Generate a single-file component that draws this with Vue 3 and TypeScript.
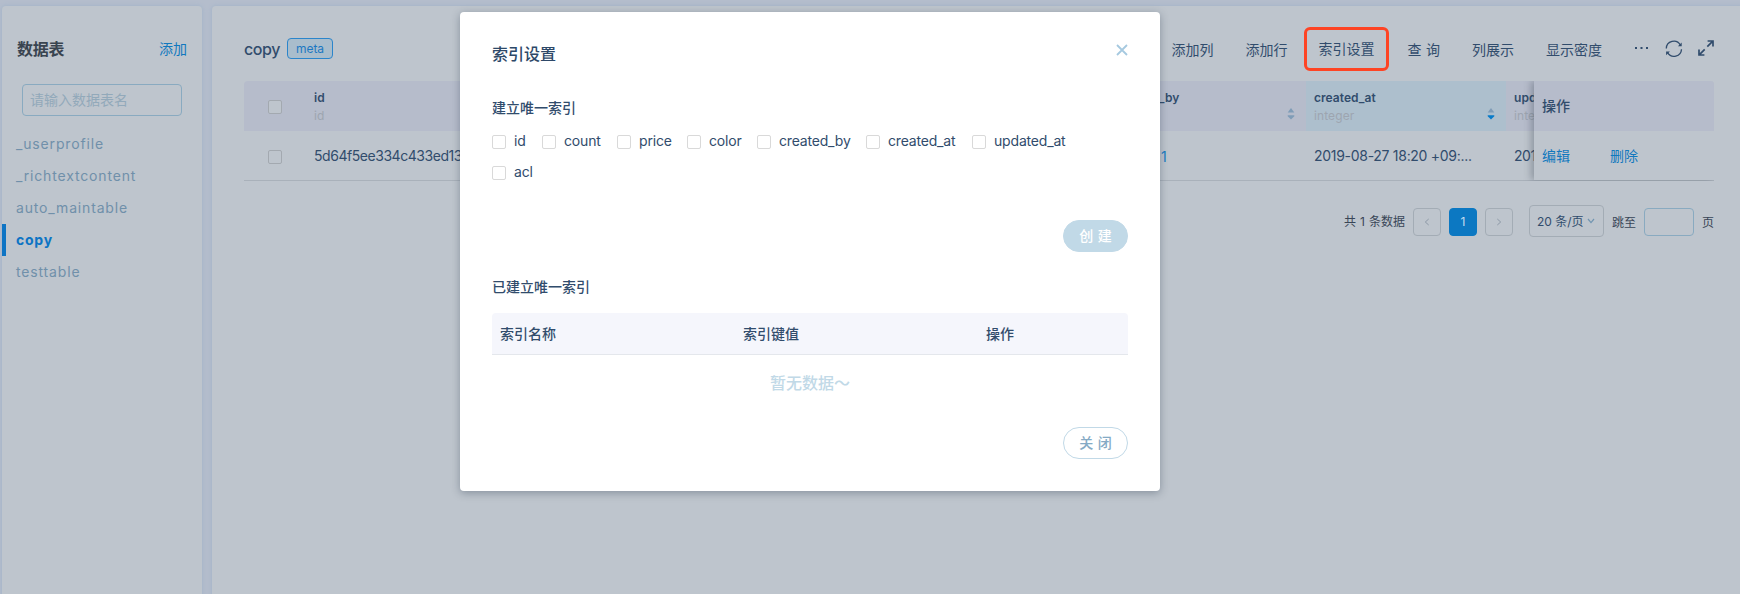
<script setup lang="ts">
import { ref } from 'vue'

interface Column {
  title: string
  type: string
  value: string
  sortable?: boolean
  sorted?: boolean
  link?: boolean
}

const tables: string[] = ['_userprofile', '_richtextcontent', 'auto_maintable', 'copy', 'testtable']
const current = ref('copy')
const actions: string[] = ['添加列', '添加行', '索引设置', '查 询', '列展示', '显示密度']
const fields: string[] = ['id', 'count', 'price', 'color', 'created_by', 'created_at', 'updated_at', 'acl']
const columns: Column[] = [
  { title: 'id', type: 'id', value: '5d64f5ee334c433ed13' },
  { title: '', type: '', value: '' },
  { title: '', type: '', value: '' },
  { title: '', type: '', value: '' },
  { title: 'created_by', type: '', value: '1', sortable: true, link: true },
  { title: 'created_at', type: 'integer', value: '2019-08-27 18:20 +09:...', sortable: true, sorted: true },
  { title: 'upd', type: 'inte', value: '201' },
]
</script>

<template>
  <div class="page">
    <aside class="card sidebar">
      <header class="side-head">
        <h2>数据表</h2>
        <a>添加</a>
      </header>
      <div class="search">请输入数据表名</div>
      <ul class="tables">
        <li v-for="t in tables" :key="t" :class="{ active: t === current }" @click="current = t">{{ t }}</li>
      </ul>
    </aside>

    <main class="card content">
      <header class="bar">
        <span class="name">copy</span>
        <span class="tag">meta</span>
        <nav class="tools">
          <span v-for="a in actions" :key="a" :class="['tool', { marked: a === '索引设置' }]"><span>{{ a }}</span></span>
          <svg class="dots" width="14" height="4" viewBox="0 0 14 4"><rect x="0" y="1" width="2" height="2" /><rect x="5.5" y="1" width="2" height="2" /><rect x="11" y="1" width="2" height="2" /></svg>
          <svg class="refresh" width="18" height="18" viewBox="0 0 18 18"><path d="M1.3 8.6A7.5 7.5 0 0 1 15.4 5.1M16.5 9.2A7.5 7.5 0 0 1 2.6 12.7" /><path class="tip" d="M16.7 2.4V6.2H12.9ZM1.1 15.2V11.4H4.9Z" /></svg>
          <svg class="expand" width="16" height="16" viewBox="0 0 16 16"><path d="M9.3 6.7L14.8 1.2M9.6 1H15V6.4M6.7 9.3L1.2 14.8M1 9.6V15H6.4" /></svg>
        </nav>
      </header>

      <section class="grid">
        <div class="row head">
          <div class="cell check"><i class="box" /></div>
          <div v-for="(c, i) in columns" :key="i" :class="['cell', { sorted: c.sorted }]">
            <b>{{ c.title }}</b>
            <small>{{ c.type }}</small>
            <svg v-if="c.sortable" class="sorter" width="8" height="14" viewBox="0 0 8 14">
              <path class="up" d="M4 1L7.3 5.4H.7Z" /><path class="down" d="M.7 8.2H7.3V9.2L4 12.6L.7 9.2Z" />
            </svg>
          </div>
        </div>
        <div class="row body">
          <div class="cell check"><i class="box" /></div>
          <div v-for="(c, i) in columns" :key="i" :class="['cell', { link: c.link, date: c.sorted }]"><span>{{ c.value }}</span></div>
        </div>
        <div class="fixed">
          <div class="fixed-head">操作</div>
          <div class="fixed-body"><a>编辑</a><a>删除</a></div>
        </div>
      </section>

      <footer class="pager">
        <span class="total">共 1 条数据</span>
        <span class="pg"><svg width="6" height="8" viewBox="0 0 6 8"><path d="M4.7 1L1.3 4L4.7 7" /></svg></span>
        <span class="pg on">1</span>
        <span class="pg"><svg width="6" height="8" viewBox="0 0 6 8"><path d="M1.3 1L4.7 4L1.3 7" /></svg></span>
        <span class="size">20 条/页<svg width="8" height="6" viewBox="0 0 8 6"><path d="M1 1L4 4.6L7 1" /></svg></span>
        <span class="jump">跳至</span>
        <span class="jump-input" />
        <span class="unit">页</span>
      </footer>
    </main>

    <div class="modal">
      <svg class="close" width="12" height="12" viewBox="0 0 12 12"><path d="M1 1L11 11M11 1L1 11" /></svg>
      <h1>索引设置</h1>
      <h3>建立唯一索引</h3>
      <div class="fields">
        <label v-for="f in fields" :key="f"><i class="box light" /><span>{{ f }}</span></label>
      </div>
      <div class="right create"><button class="primary">创 建</button></div>
      <h3>已建立唯一索引</h3>
      <div class="index-head"><span>索引名称</span><span>索引键值</span><span>操作</span></div>
      <p class="empty">暂无数据～</p>
      <div class="right"><button class="ghost">关 闭</button></div>
    </div>
  </div>
</template>

<style>
body { margin: 0; overflow: hidden; }
</style>

<style scoped>
* { box-sizing: border-box; }
h1, h2, h3, p, ul { margin: 0; padding: 0; font-weight: 500; }
svg { display: block; fill: none; flex: none; }
.page {
  position: relative; width: 1740px; height: 594px; overflow: hidden;
  display: flex; gap: 10px; padding: 6px 0 0 2px; background: #b4bdcc;
  font: 14px/20px Inter, "Noto Sans CJK SC", sans-serif; color: #314c6c;
}
.card { background: #bec5cd; box-shadow: 0 0 4px #9fb2c8; border-radius: 4px; height: 600px; flex: none; }
.sidebar { width: 200px; }
.side-head { display: flex; justify-content: space-between; padding: 33px 15px 0; line-height: 20px; }
h2 { font-size: 16px; font-weight: 700; color: #394450; letter-spacing: -.2px; }
a { color: #1178be; }
.search {
  margin: 25px 20px 12px; height: 32px; border: 1px solid #89aac0; border-radius: 4px;
  padding: 0 7px; line-height: 30px; color: #92a9ba;
}
.tables { list-style: none; }
.tables li { height: 32px; line-height: 32px; padding-left: 14px; letter-spacing: .84px; color: #7090aa; font-weight: 400; }
.tables .active { padding-left: 10px; border-left: 4px solid #0d74c4; color: #0d74c4; font-weight: 700; letter-spacing: .75px; }

.content { width: 1540px; padding: 0 0 0 32px; }
.bar { display: flex; align-items: center; width: 1470px; height: 75px; padding-top: 10px; }
.name { font-size: 16px; font-weight: 500; width: 43px; letter-spacing: -.4px; margin-top: 1px; }
.tag {
  width: 46px; height: 21px; border: 1px solid #2b85cb; border-radius: 4px; background: #a9bdcc;
  color: #1c78c2; font-size: 12px; line-height: 19px; text-align: center;
}
.tools { display: flex; align-items: center; margin-left: auto; height: 44px; }
.tool { height: 44px; padding: 0 13px; line-height: 39px; border: 3px solid transparent; border-radius: 6px; white-space: nowrap; }
.tool span { display: block; }
.tool:nth-child(4) { word-spacing: .6px; }
.marked { border-color: #fe4424; padding: 0 12px 0 11px; margin: 1px 2px 0 1px; line-height: 37px; }
.dots { fill: #314c6c; margin: -1px 16px 0 17px; }
.refresh { stroke: #314c6c; stroke-width: 1.3; margin: 0 15px 0 0; }
.tip { fill: #314c6c; stroke: none; }
.expand { stroke: #314c6c; stroke-width: 1.7; margin-top: -1px; }

.grid { position: relative; width: 1470px; height: 100px; overflow: hidden; border-radius: 4px 4px 0 0; margin-bottom: 24px; }
.row { display: grid; grid-template-columns: 62px repeat(6, 200px) 28px 180px; height: 50px; }
.head { background: #b6bccb; }
.body { border-bottom: 1px solid #a9b1ba; }
.cell { position: relative; padding: 0 0 0 8px; white-space: nowrap; }
.head .cell { padding-top: 8px; }
.head b, .head small { display: block; font-size: 12px; line-height: 18px; height: 18px; }
.head b { font-weight: 600; letter-spacing: .05px; }
.head small { color: #9da5b0; letter-spacing: .1px; }
.body .cell { line-height: 49px; letter-spacing: -.45px; }
.body .date { letter-spacing: -.29px; }
.row .check { display: flex; align-items: center; padding: 0 0 0 24px; }
.row.head .check { padding-top: 2px; }
.sorted { background: #adbfcd; }
.sorter { position: absolute; right: 11px; top: 26px; fill: #7f9cb7; }
.sorted .down { fill: #087bc9; }
.body .link { padding-left: 55px; line-height: 52px; color: #1b7dc3; }
.box { display: block; flex: none; width: 14px; height: 14px; border: 1px solid #a3a9b0; border-radius: 2px; background: #bec5cd; }
.light { background: #fff; border-color: #d9d9d9; }
.fixed { position: absolute; top: 0; right: 0; width: 180px; height: 99px; background: #bec5cd; box-shadow: -3px 0 7px rgba(55, 65, 80, .35); }
.fixed-head { height: 50px; line-height: 50px; padding-left: 8px; font-weight: 500; background: #b6bccb; }
.fixed-body { line-height: 50px; padding-left: 8px; display: flex; gap: 40px; }

.pager { display: flex; align-items: center; justify-content: flex-end; width: 1470px; height: 32px; gap: 8px; font-size: 12px; color: #394657; white-space: nowrap; }
.total { margin-top: 2px; word-spacing: .7px; }
.pg { width: 28px; height: 28px; border: 1px solid #a3acb5; border-radius: 4px; display: flex; align-items: center; justify-content: center; margin-top: 2px; }
.pg svg { stroke: #8d99a7; }
.pg.on { background: #0c78c2; border-color: #0c78c2; color: #c3dcef; }
.size { width: 75px; height: 32px; border: 1px solid #a3acb5; border-radius: 4px; margin-left: 8px; padding: 2px 0 0 7px; display: flex; align-items: center; gap: 3px; color: #314c6c; }
.size svg { stroke: #7195b1; stroke-width: 1.2; margin-top: -3px; }
.jump, .unit { margin-top: 3px; }
.jump-input { width: 50px; height: 28px; border: 1px solid #89aac0; border-radius: 4px; margin-top: 2px; }

.modal {
  position: absolute; left: 460px; top: 12px; width: 700px; height: 479px; padding: 30px 32px 0;
  background: #fff; border-radius: 4px; box-shadow: 0 2px 8px rgba(30, 45, 65, .35);
}
.close { position: absolute; right: 32px; top: 32px; stroke: #a6c9e0; stroke-width: 1.8; }
h1 { font-size: 16px; line-height: 24px; color: #2d4868; }
h3 { font-size: 14px; line-height: 20px; }
h1 + h3 { margin-top: 32px; }
.fields { display: grid; grid-template-columns: 50px 75px 70px 70px 109px 106px 110px; row-gap: 11px; margin-top: 13px; }
.fields label { display: flex; align-items: center; height: 20px; gap: 8px; letter-spacing: -.18px; }
.fields .box { margin-top: 2px; }
.right { display: flex; justify-content: flex-end; }
.create { margin: 38px 0 25px; }
button { width: 65px; height: 32px; border-radius: 16px; font: 500 14px/28px Inter, "Noto Sans CJK SC", sans-serif; padding: 0; border: 1px solid #c1d9e7; white-space: nowrap; word-spacing: 1px; }
.primary { background: #c1d9e7; color: #fff; }
.ghost { background: #fff; color: #85aac5; }
.index-head { display: grid; grid-template-columns: 243px 243px 1fr; height: 42px; line-height: 41px; margin-top: 16px; padding-left: 8px; background: #f5f6fc; border-bottom: 1px solid #e4e7ec; border-radius: 4px 4px 0 0; font-weight: 500; }
.empty { font-size: 16px; line-height: 24px; text-align: center; color: #c1d9e7; margin: 16px 0 32px; font-weight: 500; }
</style>
